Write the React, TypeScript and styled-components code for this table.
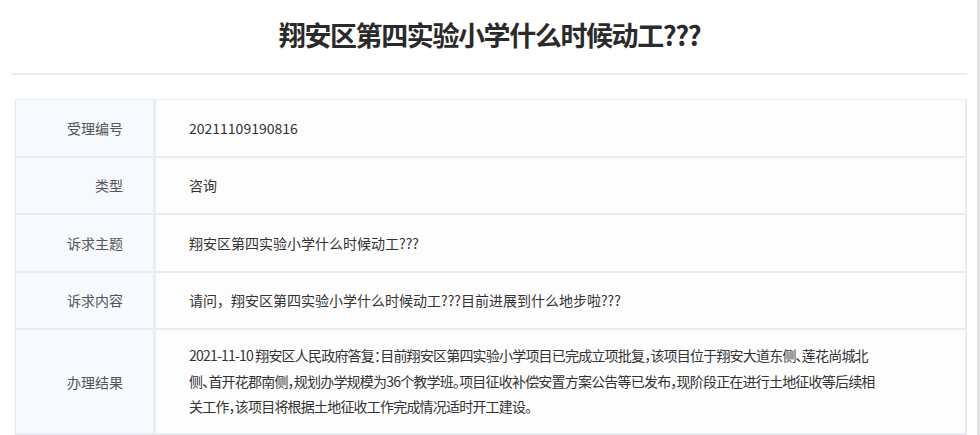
import React from "react";
import styled, { createGlobalStyle } from "styled-components";

const GlobalStyle = createGlobalStyle`
  html, body { margin: 0; padding: 0; background: #ffffff; }
  body {
    font-family: "Noto Sans CJK SC", "Liberation Sans", sans-serif;
    color: #333;
    overflow: hidden;
  }
`;

const Page = styled.div`
  width: 980px;
  height: 435px;
  box-sizing: border-box;
  padding: 0 10px 0 12px;
  border-right: 3px solid #e2e2e2;
  overflow: hidden;
`;

const Header = styled.header`
  height: 73px;
  display: flex;
  align-items: center;
  justify-content: center;
  border-bottom: 2px solid #ececec;
`;

const Title = styled.h1`
  margin: 0 0 4px 0;
  font-size: 27px;
  font-weight: 700;
  letter-spacing: -1.4px;
  color: #2a2a2a;
  line-height: 1;
`;

const Table = styled.div`
  margin: 24px 0 0 3px;
  border: 1px solid #e8ecf1;
  border-right-width: 2px;
  display: flex;
  flex-direction: column;
`;

const Row = styled.div<{ $tall?: boolean }>`
  display: grid;
  grid-template-columns: 140px 1fr;
  min-height: ${(p) => (p.$tall ? "103px" : "55.5px")};
  border-bottom: 2px solid #e9ecf0;
`;

const Label = styled.div`
  background: #f6f9fd;
  border-right: 3px solid #e8eef6;
  display: flex;
  align-items: center;
  justify-content: flex-end;
  padding-right: 30px;
  font-size: 14px;
  color: #555;
`;

const Value = styled.div<{ $multi?: boolean }>`
  display: flex;
  align-items: center;
  padding: ${(p) => (p.$multi ? "13px 20px 13px 33px" : "0 20px 0 33px")};
  font-size: 14px;
  color: #333;
  background: #fdfdfd;
  line-height: ${(p) => (p.$multi ? "25.5px" : "normal")};
  letter-spacing: ${(p) => (p.$multi ? "-0.8px" : "0")};
  font-feature-settings: ${(p) => (p.$multi ? '"halt"' : "normal")};
`;

const Lines = styled.div`
  white-space: nowrap;
`;

const rows: { label: string; value: string }[] = [
  { label: "受理编号", value: "20211109190816" },
  { label: "类型", value: "咨询" },
  { label: "诉求主题", value: "翔安区第四实验小学什么时候动工???" },
  { label: "诉求内容", value: "请问，翔安区第四实验小学什么时候动工???目前进展到什么地步啦???" },
];

const resultLines = [
  "2021-11-10 翔安区人民政府答复：目前翔安区第四实验小学项目已完成立项批复，该项目位于翔安大道东侧、莲花尚城北",
  "侧、首开花郡南侧，规划办学规模为36个教学班。项目征收补偿安置方案公告等已发布，现阶段正在进行土地征收等后续相",
  "关工作，该项目将根据土地征收工作完成情况适时开工建设。",
];

export default function App() {
  return (
    <>
      <GlobalStyle />
      <Page>
        <Header>
          <Title>翔安区第四实验小学什么时候动工???</Title>
        </Header>
        <Table>
          {rows.map((r) => (
            <Row key={r.label}>
              <Label>{r.label}</Label>
              <Value>{r.value}</Value>
            </Row>
          ))}
          <Row $tall>
            <Label>办理结果</Label>
            <Value $multi>
              <Lines>
                {resultLines.map((l, i) => (
                  <React.Fragment key={i}>
                    {l}
                    {i < resultLines.length - 1 && <br />}
                  </React.Fragment>
                ))}
              </Lines>
            </Value>
          </Row>
        </Table>
      </Page>
    </>
  );
}
